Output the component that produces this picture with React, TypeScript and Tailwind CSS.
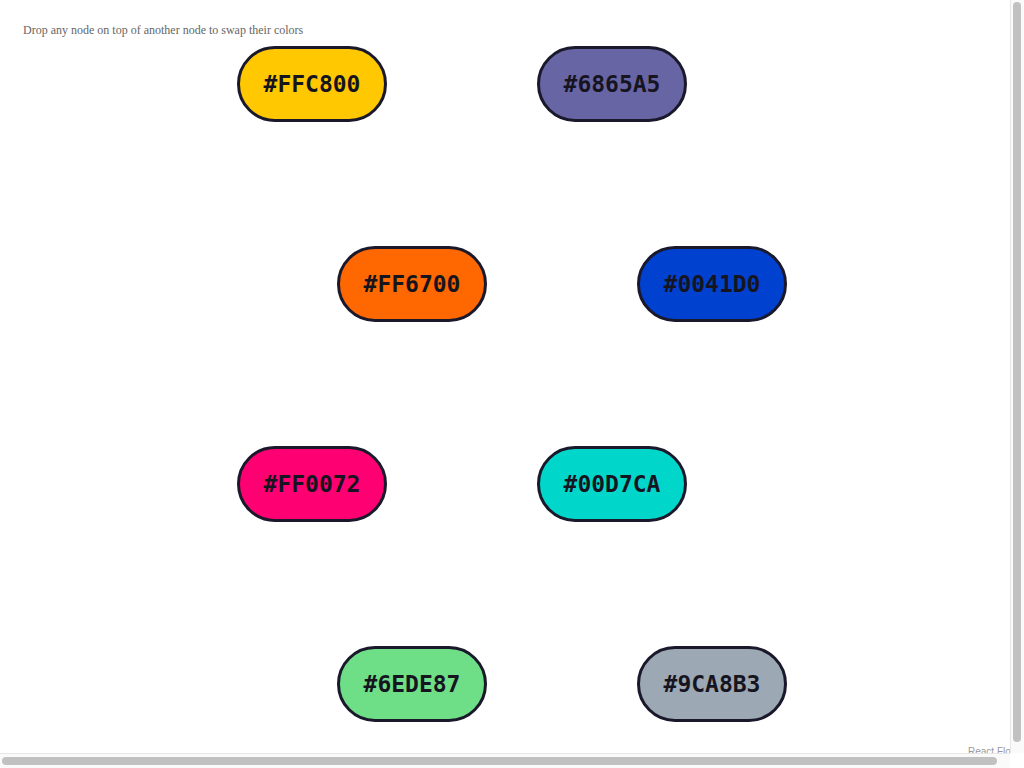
import React from 'react'

type SwatchNode = { id: string; color: string; x: number; y: number }

// node positions on the flow canvas (top-left of each node)
const NODES: SwatchNode[] = [
  { id: '1', color: '#FFC800', x: 237, y: 46 },
  { id: '2', color: '#6865A5', x: 537, y: 46 },
  { id: '3', color: '#FF6700', x: 337, y: 246 },
  { id: '4', color: '#0041D0', x: 637, y: 246 },
  { id: '5', color: '#FF0072', x: 237, y: 446 },
  { id: '6', color: '#00D7CA', x: 537, y: 446 },
  { id: '7', color: '#6EDE87', x: 337, y: 646 },
  { id: '8', color: '#9CA8B3', x: 637, y: 646 },
]

function ColorNode({ node }: { node: SwatchNode }) {
  return (
    <div
      className="absolute flex h-[76px] w-[150px] items-center justify-center rounded-full border-[3px] border-[#1a192b] text-[23px] font-bold text-[#16151f] font-['DejaVu_Sans_Mono',monospace]"
      style={{ left: node.x, top: node.y, backgroundColor: node.color }}
    >
      {node.color}
    </div>
  )
}

// page scrollbars (the flow is 100vw x 100vh so the page overflows both ways)
function Scrollbars() {
  return (
    <>
      <div className="fixed right-0 top-0 bottom-[15px] w-[14px] border-l border-[#e6e6e6] bg-[#fafafa] p-[2px]">
        <div className="h-[740px] w-[8px] rounded-full bg-[#c1c1c1]" />
      </div>
      <div className="fixed bottom-0 left-0 right-[14px] h-[15px] border-t border-[#e6e6e6] bg-[#fafafa] px-[2px] pt-[3px]">
        <div className="h-[8px] w-[995px] rounded-full bg-[#c1c1c1]" />
      </div>
      <div className="fixed bottom-0 right-0 h-[15px] w-[14px] bg-white" />
    </>
  )
}

export default function App() {
  return (
    <div className="relative h-screen w-screen bg-white px-[23px] pt-[21px]">
      {/* Hint text */}
      <p className="text-[12px] text-[#666] font-['Liberation_Serif',serif]">
        Drop any node on top of another node to swap their colors
      </p>

      {/* Flow canvas */}
      <div className="absolute inset-0">
        {NODES.map((node) => (
          <ColorNode key={node.id} node={node} />
        ))}
      </div>

      {/* Attribution */}
      <div className="absolute bottom-[7px] right-[3px] bg-white/50 px-[3px] py-[2px] text-[10px] text-[#999] font-['Liberation_Sans',sans-serif]">
        React Flow
      </div>

      <Scrollbars />
    </div>
  )
}
